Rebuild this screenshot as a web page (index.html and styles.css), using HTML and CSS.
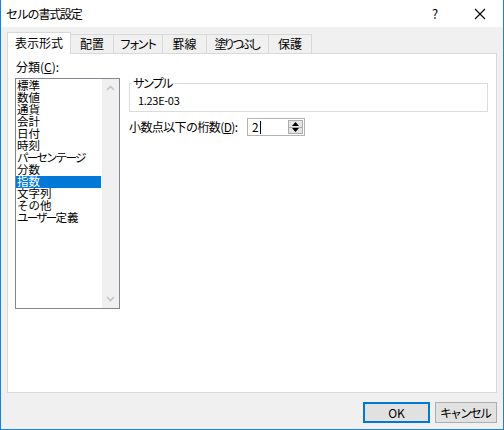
FILE: index.html
```html
<!DOCTYPE html>
<html lang="ja">
<head>
<meta charset="utf-8">
<link rel="stylesheet" href="styles.css">
</head>
<body>
<div class="window">
  <div class="titlebar">
    <span class="title">セルの書式設定</span>
    <span class="help">?</span>
    <span class="close">
      <svg width="12" height="12" viewBox="0 0 12 12"><path d="M1 1L11 11M11 1L1 11" stroke="#000" stroke-width="1.1" fill="none"/></svg>
    </span>
  </div>
  <div class="client">
    <div class="tabs">
      <div class="tab active">表示形式</div>
      <div class="tab">配置</div>
      <div class="tab kana">フォント</div>
      <div class="tab">罫線</div>
      <div class="tab kana">塗りつぶし</div>
      <div class="tab">保護</div>
    </div>
    <div class="panel">
      <div class="leftcol">
        <div class="label">分類(<u>C</u>):</div>
        <div class="listbox">
          <ul class="items">
            <li>標準</li>
            <li>数値</li>
            <li>通貨</li>
            <li>会計</li>
            <li>日付</li>
            <li>時刻</li>
            <li class="kana">パーセンテージ</li>
            <li>分数</li>
            <li class="sel">指数</li>
            <li>文字列</li>
            <li>その他</li>
            <li><span class="kana">ユーザー</span>定義</li>
          </ul>
          <div class="vscroll">
            <svg class="arr" width="9" height="6" viewBox="0 0 9 6"><path d="M1 5L4.5 1.5L8 5" stroke="#c5c5c5" stroke-width="1.6" fill="none"/></svg>
            <svg class="arr" width="9" height="6" viewBox="0 0 9 6"><path d="M1 1L4.5 4.5L8 1" stroke="#c5c5c5" stroke-width="1.6" fill="none"/></svg>
          </div>
        </div>
      </div>
      <div class="rightcol">
        <div class="sample">
          <span class="legend">サンプル</span>
          <span class="sampletext">1.23E-03</span>
        </div>
        <div class="digits">
          <span class="dlabel">小数点以下の桁数(<u>D</u>):</span>
          <div class="spin">
            <span class="spinval">2<span class="caret"></span></span>
            <div class="spinbtns">
              <div class="sb"><svg width="7" height="4" viewBox="0 0 7 4"><path d="M0 4L3.5 0L7 4Z" fill="#000"/></svg></div>
              <div class="sb"><svg width="7" height="4" viewBox="0 0 7 4"><path d="M0 0L3.5 4L7 0Z" fill="#000"/></svg></div>
            </div>
          </div>
        </div>
      </div>
    </div>
    <div class="buttons">
      <button class="btn default">OK</button>
      <button class="btn cancel">キャンセル</button>
    </div>
  </div>
</div>
</body>
</html>
```
FILE: styles.css
```css
* { box-sizing: border-box; }
html, body { margin: 0; padding: 0; }
body {
  width: 504px;
  height: 430px;
  font-family: "Noto Sans CJK JP", "Liberation Sans", sans-serif;
  font-size: 12px;
  color: #000;
  overflow: hidden;
}
.window {
  width: 504px;
  height: 430px;
  border: 1px solid #1883d7;
  border-top: none;
  display: flex;
  flex-direction: column;
  background: #f0f0f0;
}
.titlebar {
  height: 27px;
  background: #fff;
  display: flex;
  align-items: center;
  padding-left: 5px;
  flex: none;
}
.title { font-size: 12px; flex: 1; line-height: 14px; letter-spacing: -1.2px; }
.help { width: 20px; font-size: 13px; margin-right: 26px; text-align: center; }
.close { width: 18px; margin-right: 14px; display: flex; justify-content: center; }
.client {
  flex: 1;
  display: flex;
  flex-direction: column;
  padding: 5px 6px 0 5px;
}
.tabs {
  display: flex;
  height: 21px;
  padding-left: 1px;
  align-items: flex-end;
  position: relative;
  z-index: 1;
}
.tab {
  height: 19px;
  border: 1px solid #d9d9d9;
  border-bottom: none;
  background: #f0f0f0;
  padding: 0;
  line-height: 18px;
  margin-left: -1px;
  white-space: nowrap;
  text-align: center;
}
.tab.kana { letter-spacing: -3.2px; text-indent: -2px; }
.tab:nth-child(2) { width: 44px; }
.tab:nth-child(3) { width: 50px; }
.tab:nth-child(4) { width: 45px; }
.tab:nth-child(5) { width: 63px; }
.tab:nth-child(6) { width: 44px; }
.tab.active {
  height: 22px;
  width: 64px;
  background: #fff;
  margin-left: 0;
  margin-bottom: -1px;
  border-color: #d9d9d9;
  line-height: 20px;
  position: relative;
  z-index: 2;
}
.panel {
  height: 340px;
  background: #fff;
  border: 1px solid #d9d9d9;
  margin-left: 1px;
  display: flex;
  padding: 6px 7px 0 7px;
  gap: 9px;
  flex: none;
}
.leftcol { width: 105px; display: flex; flex-direction: column; }
.label { height: 18px; line-height: 14px; padding-left: 1px; }
.listbox {
  height: 231px;
  border: 1px solid #828790;
  display: flex;
  background: #fff;
}
.items {
  list-style: none;
  margin: 0;
  padding: 0;
  flex: 1;
  font-family: "Liberation Serif", "Noto Sans CJK JP", sans-serif;
  font-size: 11.5px;
}
.items li {
  height: 12px;
  line-height: 12px;
  padding-left: 1px;
  white-space: nowrap;
}
.items .kana { letter-spacing: -1.8px; }
.items li:first-child { margin-top: 1px; }
.items li.sel { background: #0078d7; color: #fff; margin-right: 1px; }
.vscroll {
  width: 17px;
  background: #f0f0f0;
  display: flex;
  flex-direction: column;
  justify-content: space-between;
  align-items: center;
  padding: 6px 0 6px;
}
.rightcol { flex: 1; display: flex; flex-direction: column; }
.sample {
  margin-top: 23px;
  margin-right: 1px;
  height: 29px;
  border: 1px solid #dcdcdc;
  position: relative;
  padding: 7px 0 0 8px;
}
.legend {
  position: absolute;
  top: -9px;
  left: 2px;
  background: #fff;
  padding: 0 2px 0 1px;
  line-height: 16px;
  letter-spacing: -2.4px;
}
.sampletext { line-height: 14px; font-size: 11px; letter-spacing: -0.3px; }
.digits {
  margin-top: 6px;
  display: flex;
  align-items: center;
  height: 18px;
}
.dlabel { width: 118px; line-height: 14px; letter-spacing: -0.6px; white-space: nowrap; }
.spin {
  width: 58px;
  height: 18px;
  border: 1px solid #b4b4b4;
  display: flex;
  background: #fff;
}
.spinval { flex: 1; padding-left: 4px; line-height: 16px; display: flex; align-items: center; }
.caret { display: inline-block; width: 1px; height: 13px; background: #000; margin-left: 1px; }
.spinbtns { width: 16px; display: flex; flex-direction: column; padding: 1px 1px 1px 0; }
.sb {
  flex: 1;
  background: #e5e5e5;
  border: 1px solid #acacac;
  display: flex;
  align-items: center;
  justify-content: center;
}
.sb + .sb { border-top: none; }
.buttons {
  flex: 1;
  display: flex;
  justify-content: flex-end;
  align-items: flex-start;
  padding-top: 9px;
  gap: 5px;
}
.btn {
  font-family: "Noto Sans CJK JP", "Liberation Sans", sans-serif;
  font-size: 12px;
  height: 21px;
  background: #e1e1e1;
  border: 1px solid #adadad;
  padding: 0;
  line-height: 18px;
  color: #000;
  white-space: nowrap;
}
.btn.default { width: 67px; border: 2px solid #0078d7; }
.btn.cancel { width: 62px; letter-spacing: -2px; text-indent: -2px; }
```
